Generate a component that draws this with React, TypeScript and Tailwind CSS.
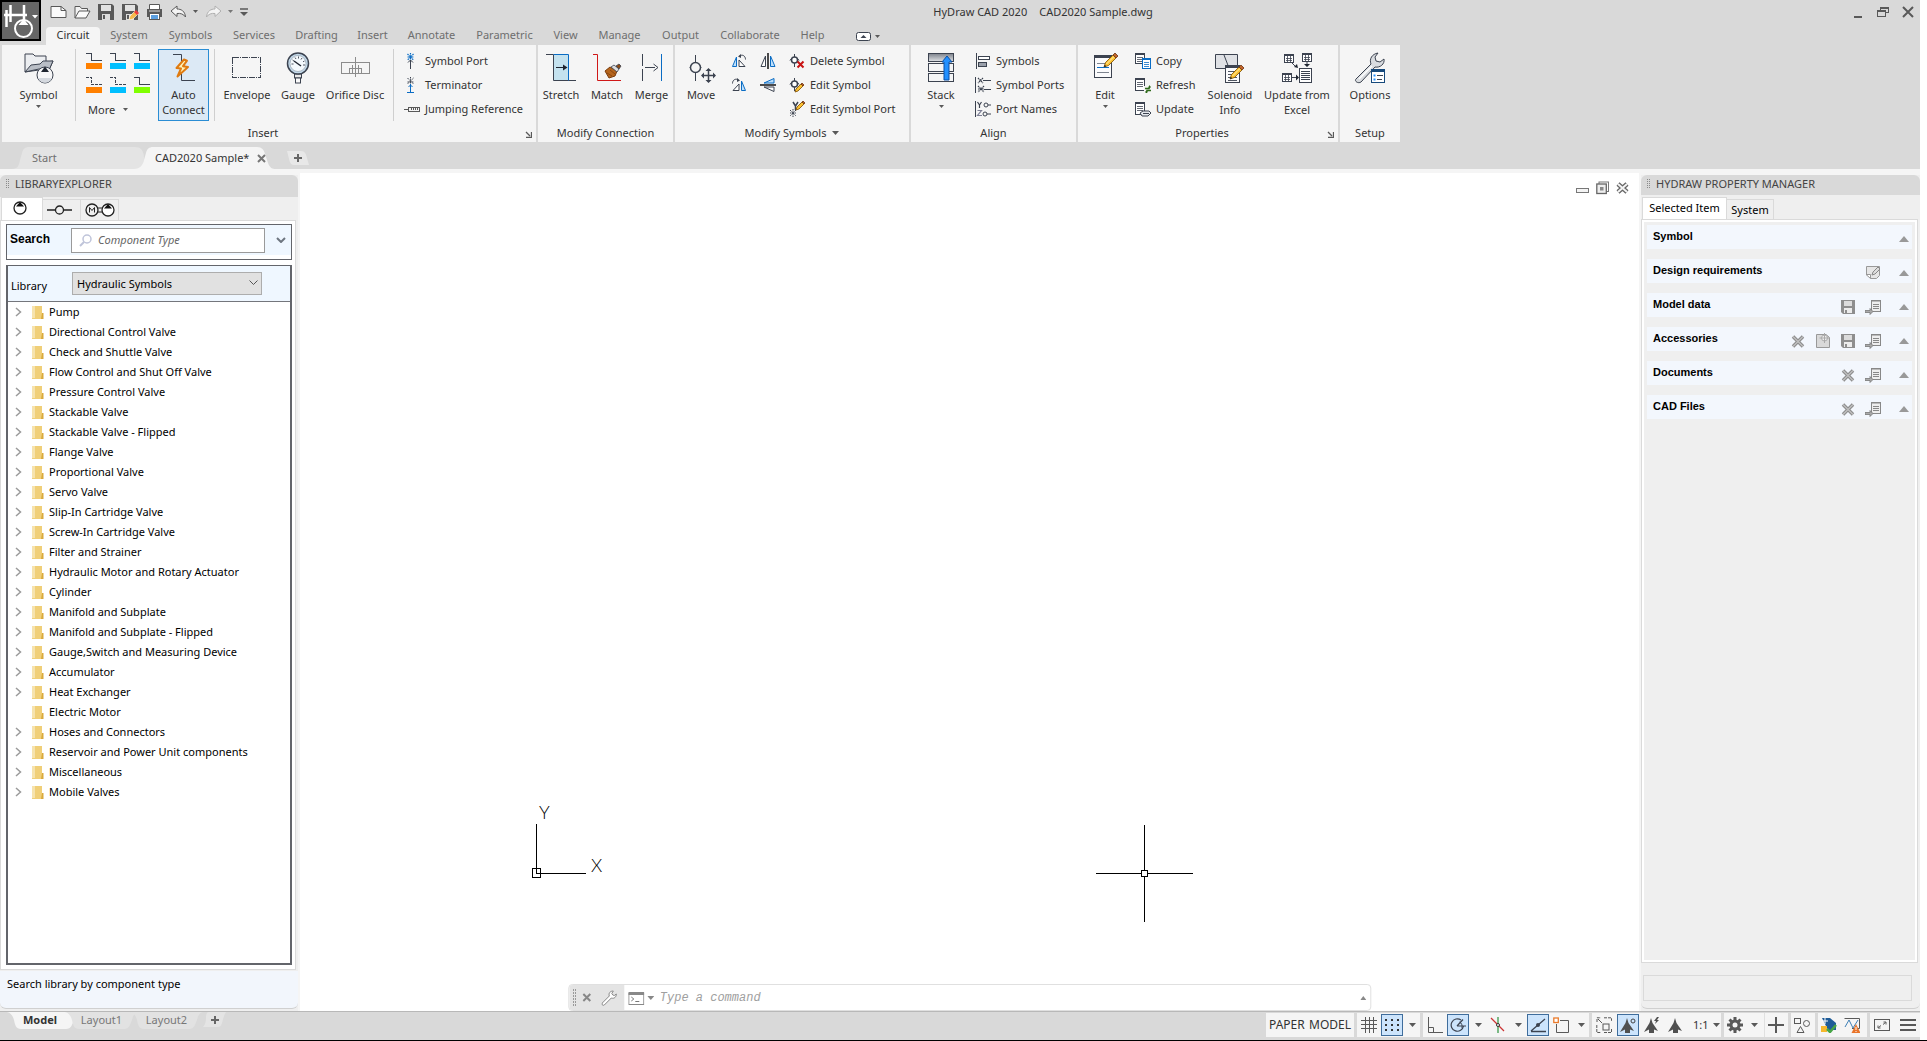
import React, { useState } from 'react';

type IconProps = { w?: number; h?: number; children: React.ReactNode; crisp?: boolean };

const INK = '#3c4350';
const GREY = '#595959';
const BLUE = '#0a6cc4';

function Icon({ w = 16, h = 16, children, crisp }: IconProps) {
  return (
    <svg
      width={w}
      height={h}
      viewBox={`0 0 ${w} ${h}`}
      fill="none"
      className="shrink-0"
      shapeRendering={crisp ? 'crispEdges' : 'auto'}
      aria-hidden="true"
    >
      {children}
    </svg>
  );
}

function Caret({ color = GREY, small }: { color?: string; small?: boolean }) {
  return small ? (
    <Icon w={5} h={3}><path d="M0 0h5L2.500 3z" fill={color} /></Icon>
  ) : (
    <Icon w={7} h={4}><path d="M0 0h7L3.500 4z" fill={color} /></Icon>
  );
}

/* ---------- shared icon parts ---------- */

const Pencil = ({ x, y }: { x: number; y: number }) => (
  <g transform={`translate(${x} ${y})`}>
    <path d="M0 14l1.500-4.500L9 2l3 3-7.500 7.500z" fill="#fcc233" stroke="#7a4a00" strokeWidth=".8" />
    <path d="M2.500 11L10 3.500" stroke="#fff0b0" strokeWidth="1" />
    <path d="M9 2l2-2 3 3-2 2z" fill="#c0642c" stroke="#6b3410" strokeWidth=".8" />
    <path d="M0 14l.8-2.200 1.500 1.400z" fill="#222" />
  </g>
);

const SmallPencil = ({ x, y }: { x: number; y: number }) => (
  <g transform={`translate(${x} ${y})`}>
    <path d="M0 9l1-3 5-5 2 2-5 5z" fill="#fcc233" stroke="#7a4a00" strokeWidth=".8" />
    <path d="M6 1l1-1 2 2-1 1z" fill="#c0642c" stroke="#6b3410" strokeWidth=".8" />
  </g>
);

const Table = ({ x, y, w, h, color = INK }: { x: number; y: number; w: number; h: number; color?: string }) => (
  <g>
    <rect x={x + 0.5} y={y + 0.5} width={w - 1} height={h - 1} fill="#fff" stroke={color} />
    <rect x={x} y={y} width={w} height={2} fill={color} />
    <path
      d={`M${x + 2} ${y + 4.5}h${w - 4}M${x + 2} ${y + 6.5}h${w - 4}${h > 10 ? `M${x + 2} ${y + 8.5}h${w - 4}` : ''}`}
      stroke={color}
      strokeWidth=".8"
    />
  </g>
);

/* ---------- quick access icons ---------- */

const NewIcon = () => (
  <Icon w={17}><path d="M1 2.500h10l5 4v7H1z" fill="#fafafa" stroke={GREY} /><path d="M11 2.500v4h5" stroke={GREY} /></Icon>
);
const OpenIcon = () => (
  <Icon w={17}><path d="M1 14V2.500h5l1.500 2h6V7" stroke={GREY} fill="#f3f3f3" /><path d="M1 14L5 7h11l-4 7z" fill="#fafafa" stroke={GREY} /></Icon>
);
const SaveIcon = ({ pencil }: { pencil?: boolean }) => (
  <Icon w={17}>
    <path d="M0 0h14l2 2v14H0z" fill={GREY} />
    <rect x="3" y="1" width="10" height="6" fill="#e2e2e2" />
    <rect x="4" y="10" width="8" height="6" fill="#ddd" />
    <rect x="5" y="11" width="2" height="4" fill={GREY} />
    {pencil && (
      <g>
        <path d="M7 16l1-4 5-5 3 3-5 5z" fill="#f8bb4c" stroke="#fff" strokeWidth=".6" />
        <path d="M12 8l2-2 3 3-2 2z" fill="#ee3d3d" />
      </g>
    )}
  </Icon>
);
const PrintIcon = () => (
  <Icon w={17}>
    <path d="M3.500 5V.5h10V5" fill="#fff" stroke={GREY} />
    <path d="M1 5h15v8H1z" fill={GREY} />
    <path d="M3 7h11" stroke="#ddd" />
    <rect x="3.500" y="9.500" width="10" height="6" fill="#fff" stroke={GREY} />
    <rect x="5" y="11" width="7" height="4" fill="#5b9fe0" />
  </Icon>
);
const UndoIcon = ({ color = GREY, flip }: { color?: string; flip?: boolean }) => (
  <Icon w={17}>
    <g transform={flip ? 'translate(17 0) scale(-1 1)' : undefined}>
      <path d="M1 7l6-5v3c4 0 8 2 8.500 8-2-3-5-4-8.500-3.500v3z" fill="#f4f4f4" stroke={color} strokeLinejoin="round" />
    </g>
  </Icon>
);

/* ---------- ribbon icons, 32px ---------- */

const SymbolFolderIcon = () => (
  <Icon w={32} h={32}>
    <path d="M2 20V2h8l2 2h11v6l7-1-4 9-10 0z" fill="#eceef1" stroke={INK} />
    <path d="M2 20l6-7 9-1 3-3 10 0-4 9-10-1z" fill="#b9bec6" stroke={INK} strokeLinejoin="round" />
    <circle cx="22" cy="23" r="8" fill="#f7f7f8" stroke={INK} />
    <path d="M22 14.500l-4 5.500h8z" fill="#1f2530" />
    <path d="M15 26a7.500 7.500 0 0 0 14 0" fill="#d5d9df" />
  </Icon>
);
const AutoConnectIcon = () => (
  <Icon w={32} h={32}>
    <path d="M5 2.500h8.500V9M13.500 22v6.500H27" stroke={INK} />
    <path d="M16 7.500L8.500 16l4.500.5-3.500 8L20 15l-5-.8 4-5.500z" fill="#fff3b8" stroke="#e07b10" strokeWidth="2" strokeLinejoin="round" />
  </Icon>
);
const EnvelopeIcon = () => (
  <Icon w={32} h={32} crisp>
    <rect x="1.500" y="5.500" width="28" height="20" stroke={INK} strokeDasharray="6 1 1 1" />
  </Icon>
);
const GaugeIcon = () => (
  <Icon w={32} h={32}>
    <rect x="12.500" y="22" width="7" height="4" fill="#e9e9e9" stroke={INK} />
    <rect x="13.500" y="26" width="5" height="5" fill="#fafafa" stroke={INK} />
    <circle cx="16" cy="11.500" r="10.500" fill="#c3d9ea" stroke={INK} strokeWidth="1.500" />
    <circle cx="16" cy="11.500" r="8" fill="#f4f9fd" stroke="#8c97a3" strokeWidth=".6" />
    <path d="M9.500 12h2M10.500 8l1.500 1M13 5.500l1 1.500M16.500 4.500v2M20 6l-1 1.500M22.500 9l-1.500.8M23 13h-2" stroke={INK} strokeWidth=".9" />
    <path d="M12 9l7 5" stroke="#1f2530" strokeWidth="1.500" />
  </Icon>
);
const OrificeIcon = () => (
  <Icon w={32} h={32} crisp>
    <path d="M2.500 10.500h28v11h-28zM16.500 5v20M10.500 21V16.500h12V21M13.500 21V13M19.500 21V13" stroke="#8c8c8c" />
  </Icon>
);
const StretchIcon = () => (
  <Icon w={32} h={32}>
    <rect x="8" y="2.500" width="15" height="26" fill="#c4e2ef" />
    <path d="M1 2.500h7.500v26H31" stroke={INK} />
    <path d="M8.500 2.500h15v26" stroke={BLUE} />
    <path d="M11 15.500h8" stroke="#1f2530" /><path d="M18 12.500l4.500 3-4.500 3z" fill="#1f2530" />
  </Icon>
);
const MatchIcon = () => (
  <Icon w={32} h={32}>
    <path d="M2 2.500h4.500v26H30" stroke="#d01818" />
    <path d="M14 19l5-4 7 4-2 5-6 2z" fill="#b5651d" stroke="#7a3c0c" />
    <path d="M16 21l5 3M19 18l5 4" stroke="#7a3c0c" strokeWidth=".7" />
    <path d="M20 15l3-2 5 4-2 3z" fill="#ddd" stroke={INK} strokeWidth=".8" />
    <path d="M25 14l3-2 2 2-2 3z" fill="#8a4b17" stroke={INK} strokeWidth=".8" />
  </Icon>
);
const MergeIcon = () => (
  <Icon w={32} h={32}>
    <path d="M6.500 2v12M6.500 17v12M9 15.500h10" stroke={INK} />
    <path d="M17.500 12l4.500 3.500-4.500 3.500" stroke={INK} />
    <path d="M25.500 2v27" stroke={BLUE} />
  </Icon>
);
const MoveIcon = () => (
  <Icon w={32} h={32}>
    <path d="M10.500 3v26" stroke={INK} />
    <path d="M10.500 11L4 16h13z" fill={INK} />
    <circle cx="10.500" cy="15.500" r="5" fill="#f5f5f5" stroke={INK} strokeWidth="1.500" />
    <path d="M23.500 17v13M17 23.500h13" stroke={INK} strokeWidth="1.500" />
    <path d="M23.500 16l-3 3h6zM23.500 31l-3-3h6zM16 23.500l3-3v6zM31 23.500l-3-3v6z" fill={INK} />
  </Icon>
);
const StackIcon = () => (
  <Icon w={32} h={32}>
    <defs>
      <linearGradient id="stk" x1="0" x2="0" y1="0" y2="1"><stop offset="0" stopColor="#7d828b" /><stop offset="1" stopColor="#dfe2e6" /></linearGradient>
    </defs>
    <rect x="3.500" y="1.500" width="25" height="8" fill="url(#stk)" stroke={INK} />
    <rect x="3.500" y="11.500" width="25" height="8" fill="#f4f5f6" stroke={INK} />
    <rect x="3.500" y="21.500" width="25" height="8" fill="#f4f5f6" stroke={INK} />
    <path d="M22 4l5 6h-3v18h-5V10h-2z" fill="#2290ff" stroke="#0a50a8" />
  </Icon>
);
const EditIcon = () => (
  <Icon w={32} h={32}>
    <rect x="5.500" y="3.500" width="17" height="22" fill="#fbfbfc" stroke={INK} />
    <rect x="5" y="3" width="18" height="3" fill={INK} />
    <path d="M8 11.500h9M8 20.500h12" stroke="#7d848f" /><path d="M8 15.500h12" stroke={BLUE} />
    <Pencil x={15} y={1} />
  </Icon>
);
const SolenoidIcon = () => (
  <Icon w={32} h={32}>
    <path d="M1.500 2.500h22v14h-22z" fill="#dfe1e5" stroke={INK} /><path d="M10 3l5 13" stroke={INK} />
    <rect x="11.500" y="13.500" width="14" height="17" fill="#fbfbfc" stroke={INK} />
    <rect x="11" y="13" width="15" height="3" fill={INK} />
    <path d="M14 19.500h8M14 22.500h6M14 25.500h9M14 28.500h9" stroke={INK} strokeWidth=".9" />
    <Pencil x={16} y={13} />
  </Icon>
);
const ExcelIcon = () => (
  <Icon w={32} h={32}>
    <Table x={3} y={2} w={10} h={9} /><Table x={21} y={1} w={10} h={9} /><Table x={1} y={21} w={10} h={9} />
    <path d="M6.500 4v6M9.500 4v6M24.500 3v6M27.500 3v6M4.500 23v6M7.500 23v6" stroke={INK} strokeWidth=".8" />
    <path d="M11 11l4 4M26 10v2M11 25.500h4" stroke={INK} />
    <path d="M17 16l-4-1 3-3zM26 15l-3-3h6zM18 25.500l-3-3v6z" fill="#1f2530" />
    <rect x="18.500" y="16.500" width="12" height="14" fill="#fff" stroke={INK} />
    <path d="M20 19.500h9M20 21.500h9M20 23.500h9M20 25.500h9M20 27.500h9" stroke={INK} />
  </Icon>
);
const OptionsIcon = () => (
  <Icon w={32} h={32}>
    <path d="M2 27L17 12c-2-5 1-10 7-11l-3 4 1 4 4 1 4-3c1 5-4 9-9 8L7 30c-3 2-7-1-5-3z" fill="#d9dce0" stroke={INK} />
    <path d="M5 27L18 14" stroke="#fff" strokeWidth="1.500" />
    <rect x="17.500" y="17.500" width="13" height="13" fill="#fff" stroke="#174a7c" />
    <rect x="17" y="17" width="14" height="3" fill="#174a7c" />
    <path d="M19.500 23.500h2M19.500 27.500h2" stroke="#2290ff" strokeWidth="2" /><path d="M23 23.500h6M23 27.500h5" stroke={INK} />
  </Icon>
);

/* ---------- ribbon icons, 16px ---------- */

const LineIcon = ({ color, dashed }: { color: string; dashed?: boolean }) => (
  <Icon w={16} h={18} crisp>
    <path d="M0 1.500h5.500v7H16" stroke={INK} strokeDasharray={dashed ? '3 1' : undefined} />
    <rect y="11" width="16" height="6" fill={color} />
  </Icon>
);
const SymbolPortIcon = () => (
  <Icon><path d="M3.500 1l6 6M9.500 1l-6 6M3.500 4h6M6.500 0v7" stroke={BLUE} strokeWidth="1.200" strokeDasharray="1.500 .7" /><path d="M6.500 7v9" stroke={INK} /><path d="M4 9.500L6.500 7 9 9.500" stroke={INK} /></Icon>
);
const TerminatorIcon = () => (
  <Icon><path d="M3.500 1l6 6M9.500 1l-6 6M3.500 5h6M6.500 0v8" stroke={INK} strokeDasharray="1.500 .7" /><path d="M6.500 7v8" stroke={BLUE} /><path d="M3 15.500h7M4.500 10L6.500 8l2 2" stroke={BLUE} /></Icon>
);
const JumpIcon = () => (
  <Icon crisp><path d="M0 8.500h4M4.500 6.500h11v4h-11zM7.500 7v2M9.500 7v2M11.500 7v2M13.500 7v2" stroke={GREY} /></Icon>
);
const FlipIcon = ({ kind }: { kind: 'rotR' | 'mirrorH' | 'rotL' | 'mirrorV' }) => {
  if (kind === 'mirrorH')
    return <Icon><path d="M5.500 3v10.500H1z" fill="#fff" stroke={INK} /><path d="M10.500 3v10.500H15z" fill="#bfe0fb" stroke={BLUE} /><path d="M8 0v16" stroke="#111" strokeWidth="1.500" /></Icon>;
  if (kind === 'mirrorV')
    return <Icon><path d="M14 1.500v4.500H4z" fill="#bfe0fb" stroke={BLUE} /><path d="M14 14.500V10H4z" fill="#fff" stroke={INK} /><path d="M0 8h16" stroke="#111" strokeWidth="1.500" /></Icon>;
  return (
    <Icon>
      <g transform={kind === 'rotL' ? 'translate(16 0) scale(-1 1)' : undefined}>
        <path d="M5.500 4v9.500H1.500z" fill="#bfe0fb" stroke={BLUE} />
        <path d="M8 13.500V7l6 6.500z" fill="#fff" stroke={INK} />
        <path d="M8.500 3c3-2 6 0 6 3.500" stroke={INK} />
        <path d="M7 3.500l3-2.500v4z" fill={INK} />
      </g>
    </Icon>
  );
};
const PortBase = () => (
  <>
    <path d="M5.500 1v13" stroke={INK} />
    <circle cx="5.500" cy="7" r="3" fill="#fff" stroke={INK} strokeWidth="1.500" />
    <path d="M2 6l-1 1.500M9 6l1 1.500" stroke={INK} />
  </>
);
const DeleteSymbolIcon = () => (
  <Icon><PortBase /><path d="M8.500 8.500l6 6M14.500 8.500l-6 6" stroke="#c81414" strokeWidth="2" /></Icon>
);
const EditSymbolIcon = () => <Icon><PortBase /><SmallPencil x={6} y={6} /></Icon>;
const EditPortIcon = () => (
  <Icon><path d="M4 1l2.500 4L9 1M6.500 5v4" stroke={INK} strokeWidth="1.500" /><path d="M1 9l6 6M7 9l-6 6M4 8v8M1 12h6" stroke={INK} strokeDasharray="1.500 .7" /><SmallPencil x={7} y={0} /></Icon>
);
const AlignSymbolsIcon = () => (
  <Icon crisp><path d="M1.500 0v16" stroke={INK} /><rect x="3.500" y="3.500" width="11" height="3" fill="#fff" stroke={INK} /><rect x="3.500" y="9.500" width="8" height="4" fill="#9aa0aa" stroke={INK} /></Icon>
);
const AlignPortsIcon = () => (
  <Icon><path d="M.5 0v16" stroke={INK} /><path d="M3 1l5 5M8 1L3 6M3 9l6 6M9 9l-6 6M3 12h6" stroke={INK} strokeWidth="1.200" strokeDasharray="1.500 .6" /><path d="M8 3.500h8M9 12.500h7" stroke={INK} /></Icon>
);
const AlignNamesIcon = () => (
  <Icon>
    <path d="M.5 0v16" stroke={INK} />
    <path d="M2.500 1l2 3 2-3M4.500 4v3" stroke={INK} strokeWidth="1.200" />
    <path d="M2.500 9.500h4l-4 5h4.500" stroke="#7d7f95" strokeWidth="1.200" />
    <circle cx="11" cy="4" r="2" stroke={INK} /><circle cx="10" cy="13" r="2" stroke={INK} /><path d="M13 4h3M12 13h4" stroke={INK} />
  </Icon>
);
const CopyIcon = () => <Icon><Table x={0} y={0} w={10} h={11} /><Table x={7} y={5} w={9} h={11} color={BLUE} /></Icon>;
const RefreshIcon = () => (
  <Icon><Table x={0} y={1} w={10} h={13} /><rect x="9" y="9" width="7" height="7" fill="#f5f5f5" /><path d="M10 11.500h4v-2M16 13.500h-4v2" stroke="#2f6b1a" strokeWidth="1.300" /><path d="M14 8v4l2-2zM12 17v-4l-2 2z" fill="#2f6b1a" /></Icon>
);
const UpdateIcon = () => (
  <Icon><Table x={0} y={1} w={10} h={13} /><path d="M5 12l3-2h6l2 2-3 3H7z" fill="#e6e9ed" stroke={INK} /><path d="M8 12.500h6" stroke={INK} /></Icon>
);

/* ---------- ribbon building blocks ---------- */

function BigButton({ icon, label, caret, active, className }: { icon: React.ReactNode; label: string; caret?: boolean; active?: boolean; className: string }) {
  return (
    <button
      type="button"
      aria-pressed={active}
      className={`flex h-[72px] shrink-0 flex-col items-center border pt-0.5 leading-[15px] ${active ? 'border-[#2a8dd4] bg-[#dce9f5]' : 'border-transparent'} ${className}`}
    >
      {icon}
      <span className="mt-[3px] whitespace-pre text-center">{label}</span>
      {caret && <span className="mt-[3px]"><Caret small /></span>}
    </button>
  );
}

function SmallButton({ icon, label }: { icon: React.ReactNode; label: string }) {
  return (
    <button type="button" className="flex h-6 items-center gap-[5px] whitespace-nowrap">
      {icon}
      {label}
    </button>
  );
}

function Panel({ title, className = '', children, launcher, dropdown }: { title: string; className?: string; children: React.ReactNode; launcher?: boolean; dropdown?: boolean }) {
  return (
    <section className={`flex shrink-0 flex-col bg-[#f5f5f5] pt-1 ${className}`}>
      <div className="flex h-[72px]">{children}</div>
      <div className={`relative flex h-[21px] items-center justify-center gap-1.5 pt-0.5 ${launcher ? 'pr-3' : ''}`}>
        {title}
        {dropdown && <Caret />}
        {launcher && (
          <button type="button" aria-label={`${title} settings`} className="absolute right-1 bottom-1">
            <Icon w={7} h={7}><path d="M1 1l4 4M6.500 1v5.500H1" stroke={GREY} strokeWidth="1.300" /></Icon>
          </button>
        )}
      </div>
    </section>
  );
}

const Sep = () => <div className="w-px shrink-0 bg-[#cfcfcf]" />;

const ribbonTabs = [
  { name: 'Circuit', w: 'w-[54px]' },
  { name: 'System', w: 'w-[58px]' },
  { name: 'Symbols', w: 'w-[65px]' },
  { name: 'Services', w: 'w-[62px]' },
  { name: 'Drafting', w: 'w-[63px]' },
  { name: 'Insert', w: 'w-[49px]' },
  { name: 'Annotate', w: 'w-[69px]' },
  { name: 'Parametric', w: 'w-[77px]' },
  { name: 'View', w: 'w-[45px]' },
  { name: 'Manage', w: 'w-[63px]' },
  { name: 'Output', w: 'w-[59px]' },
  { name: 'Collaborate', w: 'w-[80px]' },
  { name: 'Help', w: 'w-[45px]' },
];

function Header() {
  const [tab, setTab] = useState('Circuit');
  return (
    <header className="flex h-[45px] text-[#444]">
      <button type="button" aria-label="Application menu" className="h-[41px] w-[41px] shrink-0">
        <Icon w={41} h={41}>
          <rect x="1" y="1" width="39" height="39" fill="#666" stroke="#000" strokeWidth="2" />
          <path d="M4 15h23M6.500 10v17M10.500 5v17M24 5v17" stroke="#fff" strokeWidth="2.500" />
          <circle cx="23.500" cy="28.500" r="8.500" stroke="#fff" strokeWidth="2" />
          <path d="M23.500 19l-5 6h10zM32 15h6l-3 3.500z" fill="#fff" />
        </Icon>
      </button>
      <div className="flex min-w-0 flex-1 flex-col">
        <div className="flex h-[27px] items-center pb-1">
          <div className="flex w-[209px] items-center gap-[7px] pl-[9px]">
            <button type="button" aria-label="New"><NewIcon /></button>
            <button type="button" aria-label="Open"><OpenIcon /></button>
            <button type="button" aria-label="Save"><SaveIcon /></button>
            <button type="button" aria-label="Save as"><SaveIcon pencil /></button>
            <button type="button" aria-label="Print"><PrintIcon /></button>
            <button type="button" aria-label="Undo" className="flex items-center gap-1.5"><UndoIcon /><Caret small /></button>
            <button type="button" aria-label="Redo" className="flex items-center gap-1.5"><UndoIcon flip color="#b0b0b0" /><Caret small color="#777" /></button>
            <button type="button" aria-label="Customize"><Icon w={8} h={8}><path d="M0 1h8" stroke={GREY} strokeWidth="1.500" /><path d="M0 4h8L4 8z" fill={GREY} /></Icon></button>
          </div>
          <div className="flex flex-1 justify-center gap-3 text-[#333]">
            <span>HyDraw CAD 2020</span>
            <span>CAD2020 Sample.dwg</span>
          </div>
          <div className="flex w-[84px] items-center justify-end gap-[13px] pr-1.5">
            <button type="button" aria-label="Minimize"><Icon w={12} h={12}><path d="M2 11h8" stroke={GREY} strokeWidth="2" /></Icon></button>
            <button type="button" aria-label="Restore"><Icon w={12} h={12} crisp><path d="M3.500 4V1.500h8v5H9M.5 4.500h8v6h-8z" stroke={GREY} /><path d="M3 2h9M0 5h9" stroke={GREY} /></Icon></button>
            <button type="button" aria-label="Close"><Icon w={12} h={12}><path d="M1 1l10 10M11 1L1 11" stroke={GREY} strokeWidth="2" /></Icon></button>
          </div>
        </div>
        <nav className="flex h-[18px] pl-[5px] text-[#6e6e6e]">
          {ribbonTabs.map(t => (
            <button
              key={t.name}
              type="button"
              onClick={() => setTab(t.name)}
              className={`flex shrink-0 items-center justify-center pb-0.5 ${t.w} ${tab === t.name ? 'rounded-t-sm bg-[#f5f5f5] text-[#333]' : ''}`}
            >
              {t.name}
            </button>
          ))}
          <button type="button" aria-label="Minimize ribbon" className="ml-[21px] flex items-center gap-1">
            <Icon w={15} h={9}><rect x=".5" y=".5" width="14" height="8" rx="2" fill="#fff" stroke={INK} /><path d="M4.500 6h6l-3-3z" fill={INK} /></Icon>
            <Caret small />
          </button>
        </nav>
      </div>
    </header>
  );
}

function Ribbon() {
  return (
    <div className="flex gap-0.5 pl-0.5 text-[#333]">
      <Panel title="Insert" launcher className="w-[534px]">
        <BigButton icon={<SymbolFolderIcon />} label="Symbol" caret className="w-[73px]" />
        <Sep />
        <div className="flex flex-col pt-[3px] pl-2.5">
          <div className="grid grid-cols-3 gap-x-2 gap-y-1.5">
            <button type="button" aria-label="Working line"><LineIcon color="#ff8000" /></button>
            <button type="button" aria-label="Return line"><LineIcon color="#00bfff" /></button>
            <button type="button" aria-label="Drain line"><LineIcon color="#00bfff" /></button>
            <button type="button" aria-label="Pilot line"><LineIcon color="#ff8000" dashed /></button>
            <button type="button" aria-label="Pilot drain line"><LineIcon color="#00bfff" dashed /></button>
            <button type="button" aria-label="Other line"><LineIcon color="#80ff00" /></button>
          </div>
          <button type="button" className="mt-2 flex items-center gap-2 pl-0.5 leading-[15px]">More <Caret small /></button>
        </div>
        <BigButton icon={<AutoConnectIcon />} label={'Auto\nConnect'} active className="ml-2 mr-[5px] w-[51px]" />
        <Sep />
        <BigButton icon={<EnvelopeIcon />} label="Envelope" className="w-[64px]" />
        <BigButton icon={<GaugeIcon />} label="Gauge" className="w-[38px]" />
        <BigButton icon={<OrificeIcon />} label="Orifice Disc" className="w-[76px]" />
        <Sep />
        <div className="pl-2.5">
          <SmallButton icon={<SymbolPortIcon />} label="Symbol Port" />
          <SmallButton icon={<TerminatorIcon />} label="Terminator" />
          <SmallButton icon={<JumpIcon />} label="Jumping Reference" />
        </div>
      </Panel>

      <Panel title="Modify Connection" className="w-[135px]">
        <BigButton icon={<StretchIcon />} label="Stretch" className="w-[46px]" />
        <BigButton icon={<MatchIcon />} label="Match" className="w-[46px]" />
        <BigButton icon={<MergeIcon />} label="Merge" className="w-[43px]" />
      </Panel>

      <Panel title="Modify Symbols" dropdown className="w-[234px]">
        <BigButton icon={<MoveIcon />} label="Move" className="w-[52px]" />
        <div className="grid h-12 grid-cols-2 items-center gap-x-[13px] pl-1">
          <button type="button" aria-label="Rotate right"><FlipIcon kind="rotR" /></button>
          <button type="button" aria-label="Mirror horizontally"><FlipIcon kind="mirrorH" /></button>
          <button type="button" aria-label="Rotate left"><FlipIcon kind="rotL" /></button>
          <button type="button" aria-label="Mirror vertically"><FlipIcon kind="mirrorV" /></button>
        </div>
        <div className="pl-[13px]">
          <SmallButton icon={<DeleteSymbolIcon />} label="Delete Symbol" />
          <SmallButton icon={<EditSymbolIcon />} label="Edit Symbol" />
          <SmallButton icon={<EditPortIcon />} label="Edit Symbol Port" />
        </div>
      </Panel>

      <Panel title="Align" className="w-[165px]">
        <BigButton icon={<StackIcon />} label="Stack" caret className="w-[60px]" />
        <div className="pl-1">
          <SmallButton icon={<AlignSymbolsIcon />} label="Symbols" />
          <SmallButton icon={<AlignPortsIcon />} label="Symbol Ports" />
          <SmallButton icon={<AlignNamesIcon />} label="Port Names" />
        </div>
      </Panel>

      <Panel title="Properties" launcher className="w-[260px]">
        <BigButton icon={<EditIcon />} label="Edit" caret className="w-[54px]" />
        <div className="w-[66px] pl-[3px]">
          <SmallButton icon={<CopyIcon />} label="Copy" />
          <SmallButton icon={<RefreshIcon />} label="Refresh" />
          <SmallButton icon={<UpdateIcon />} label="Update" />
        </div>
        <BigButton icon={<SolenoidIcon />} label={'Solenoid\nInfo'} className="w-[64px]" />
        <BigButton icon={<ExcelIcon />} label={'Update from\nExcel'} className="w-[70px]" />
      </Panel>

      <Panel title="Setup" className="w-[60px]">
        <BigButton icon={<OptionsIcon />} label="Options" className="w-full" />
      </Panel>
    </div>
  );
}

function DocTabs() {
  return (
    <div className="flex h-[27px] items-end pl-3 text-[#333]">
      <button type="button" className="relative flex h-[22px] w-[134px] items-center pl-5 text-[#707070]">
        <span className="absolute inset-0">
          <Icon w={134} h={22}><path d="M0 22c6 0 7-4 8-9l2-7c1-4 3-6 7-6h106c5 0 9 3 9 11s-3 11-8 11z" fill="#e4e4e4" /></Icon>
        </span>
        <span className="relative">Start</span>
      </button>
      <div className="relative flex h-[22px] w-[137px] items-center pl-[9px]">
        <span className="absolute inset-0 -left-3">
          <Icon w={150} h={22}><path d="M0 22c6 0 9-4 10-9l2-7c1-4 3-6 7-6h104c5 0 7 3 8 7l3 9c2 5 4 6 8 6z" fill="#f5f5f5" /></Icon>
        </span>
        <span className="relative flex items-center gap-2">
          CAD2020 Sample*
          <button type="button" aria-label="Close drawing"><Icon w={9} h={9}><path d="M1 1l7 7M8 1L1 8" stroke="#777" strokeWidth="2" /></Icon></button>
        </span>
      </div>
      <button type="button" aria-label="New drawing" className="mb-1 ml-1">
        <Icon w={22} h={14}><path d="M0 0h14c4 0 5 3 6 7l2 7H8c-4 0-5-2-6-6z" fill="#e8e8e8" /><path d="M7 7h8M11 3v8" stroke="#666" strokeWidth="2" /></Icon>
      </button>
    </div>
  );
}

/* ---------- library explorer ---------- */

const Gripper = () => (
  <Icon w={4} h={10} crisp>
    <path d="M.5 0v10M2.500 0v10" stroke="#8a8a8a" strokeDasharray="1 1" />
  </Icon>
);

const libraryItems = [
  'Pump', 'Directional Control Valve', 'Check and Shuttle Valve', 'Flow Control and Shut Off Valve',
  'Pressure Control Valve', 'Stackable Valve', 'Stackable Valve - Flipped', 'Flange Valve', 'Proportional Valve',
  'Servo Valve', 'Slip-In Cartridge Valve', 'Screw-In Cartridge Valve', 'Filter and Strainer',
  'Hydraulic Motor and Rotary Actuator', 'Cylinder', 'Manifold and Subplate', 'Manifold and Subplate - Flipped',
  'Gauge,Switch and Measuring Device', 'Accumulator', 'Heat Exchanger', 'Electric Motor', 'Hoses and Connectors',
  'Reservoir and Power Unit components', 'Miscellaneous', 'Mobile Valves',
];

const PumpIcon = ({ x }: { x: number }) => (
  <g><circle cx={x} cy="7" r="6" fill="#fff" stroke="#222" strokeWidth="1.300" /><path d={`M${x} 1l-4 4.500h8z`} fill="#111" /></g>
);

function LibraryExplorer() {
  return (
    <aside className="flex w-[300px] shrink-0 flex-col bg-[#f5f5f5] pt-0.5 text-black">
      <div className="mr-0.5 flex min-h-0 flex-1 flex-col bg-[#efefef]">
        <h2 className="flex h-[22px] items-center gap-[5px] rounded-t-md bg-[#d9d9d9] pb-1 pl-1.5 text-[#444]"><Gripper />LIBRARYEXPLORER</h2>
        <div className="flex h-[23px] items-end pl-px">
          <button type="button" aria-label="Symbols" className="flex h-[23px] w-[42px] justify-center border border-b-0 border-[#dadada] bg-white pt-[3px] pr-1">
            <Icon w={15} h={14}><PumpIcon x={7} /></Icon>
          </button>
          <button type="button" aria-label="Connections" className="flex h-[21px] w-[38px] items-center justify-center border-t border-r border-[#dadada] pr-1">
            <Icon w={26} h={10}><path d="M0 5h8M17 5h8" stroke="#222" strokeWidth="1.500" /><circle cx="12.500" cy="5" r="4" stroke="#222" strokeWidth="1.300" /></Icon>
          </button>
          <button type="button" aria-label="Units" className="flex h-[21px] w-[38px] items-center justify-center border-t border-r border-[#dadada]">
            <Icon w={30} h={14}><circle cx="7" cy="7" r="6" stroke="#222" strokeWidth="1.300" /><path d="M4.500 9.500v-5L7 7.500l2.500-3v5M13 5h5M13 9h5" stroke="#222" strokeWidth="1" /><PumpIcon x={23} /></Icon>
          </button>
        </div>
        <div className="mr-0.5 flex min-h-0 flex-1 flex-col gap-[5px] border border-[#dadada] bg-white pt-[3px] pr-[3px] pb-1 pl-[5px]">
          <div className="border border-[#63656b] pb-1">
            <div className="flex h-[30px] items-center bg-[#eff7ff] pl-[3px]">
              <label htmlFor="search" className="w-[61px] pb-0.5 font-['Liberation_Sans',sans-serif] text-[12px] font-bold">Search</label>
              <div className="flex h-[25px] flex-1 items-center gap-1.5 border border-[#9a9a9a] bg-white pl-[7px]">
                <Icon w={13} h={13}><circle cx="8" cy="5" r="4" stroke="#bfc4da" strokeWidth="1.500" /><path d="M5 8l-4 4" stroke="#bfc4da" strokeWidth="2" /></Icon>
                <input id="search" type="text" placeholder="Component Type" className="w-full min-w-0 italic outline-none placeholder:text-[#666]" />
              </div>
              <button type="button" aria-label="Expand search" className="flex w-[26px] justify-center pl-1.5">
                <Icon w={10} h={6}><path d="M1 1l4 4 4-4" stroke="#6e7680" strokeWidth="2" /></Icon>
              </button>
            </div>
          </div>
          <div className="flex min-h-0 flex-1 flex-col border-2 border-t border-[#63656b]">
            <div className="flex h-[35px] items-center bg-[#eff7ff] pl-[3px]">
              <label htmlFor="library" className="w-[61px] pt-1">Library</label>
              <div className="relative w-[190px]">
                <select id="library" className="h-[23px] w-full appearance-none border border-[#adadad] bg-[#e1e1e1] pl-1">
                  <option>Hydraulic Symbols</option>
                </select>
                <span className="pointer-events-none absolute top-2 right-1"><Icon w={9} h={6}><path d="M.5.5l4 4 4-4" stroke="#555" /></Icon></span>
              </div>
            </div>
            <ul className="min-h-0 flex-1 overflow-hidden border-t border-[#74767c] bg-white">
              {libraryItems.map(item => (
                <li key={item}>
                  <button type="button" className="flex h-5 w-full items-center pl-[7px]">
                    <span className="flex w-[17px]">
                      {item !== 'Electric Motor' && <Icon w={7} h={10}><path d="M1 1l4.500 4L1 9" stroke="#9a9a9a" strokeWidth="1.500" /></Icon>}
                    </span>
                    <Icon w={12} h={14}><path d="M0 1h10v13H0z" fill="#f0cf78" /><path d="M0 1h3v12H0z" fill="#f6e3ae" /><path d="M10 8h1.500v6H9z" fill="#d9a93c" /></Icon>
                    <span className="ml-[5px] whitespace-nowrap">{item}</span>
                  </button>
                </li>
              ))}
            </ul>
          </div>
        </div>
        <p className="mt-px mb-0.5 h-[38px] rounded-b-md border-b border-[#d0d0d0] bg-[#f2f6fc] pt-[5px] pl-[7px]">Search library by component type</p>
      </div>
    </aside>
  );
}

/* ---------- drawing area ---------- */

function Canvas() {
  return (
    <main className="relative min-w-0 flex-1 bg-white">
      <div className="absolute top-2 right-2.5 flex items-center gap-[7px]">
        <button type="button" aria-label="Minimize drawing"><Icon w={13} h={14}><rect x=".5" y="7.500" width="12" height="4" fill="#f4f4f4" stroke="#777" /></Icon></button>
        <button type="button" aria-label="Restore drawing"><Icon w={13} h={14}><rect x="3" y="1" width="9.500" height="9.500" fill="#fff" stroke="#777" /><rect x=".8" y="3" width="9.500" height="9.500" fill="#eee" stroke="#666" strokeWidth="1.300" /><rect x="4" y="6" width="3.500" height="3.500" fill="#888" /></Icon></button>
        <button type="button" aria-label="Close drawing"><Icon w={13} h={14}><path d="M2 3l9 8M11 3l-9 8" stroke="#666" strokeWidth="4.500" /><path d="M2 3l9 8M11 3l-9 8" stroke="#f4f4f4" strokeWidth="2" /></Icon></button>
      </div>

      {/* UCS origin */}
      <div className="absolute bottom-[132px] left-[231px]">
        <svg width="84" height="80" viewBox="0 -4 84 80" fill="none" shapeRendering="crispEdges">
          <path d="M5.500 21v49.500H55M1.500 65.500h8v9h-8z" stroke="#000" />
          <text x="8" y="16" fontSize="18" fill="#000" fontFamily="Lato, sans-serif" fontWeight="300">Y</text>
          <text x="60" y="69" fontSize="18" fill="#000" fontFamily="Lato, sans-serif" fontWeight="300">X</text>
        </svg>
      </div>

      {/* crosshair cursor */}
      <div className="absolute bottom-[89px] left-[796px]">
        <Icon w={97} h={97} crisp><path d="M48.500 0v45M48.500 52v45M0 48.500h45M52 48.500h45M45.500 45.500h6v6h-6z" stroke="#000" /></Icon>
      </div>

      <div className="absolute bottom-0 left-1/2 flex h-[27px] w-3/5 -translate-x-1/2 overflow-hidden rounded border border-[#e0e0e0] bg-white">
        <div className="flex w-[55px] shrink-0 items-center gap-1.5 bg-[#e4e4e4] pl-[3px]">
          <Icon w={4} h={17} crisp><path d="M1 0v17M3 0v17" stroke="#999" strokeWidth="1" strokeDasharray="2 1" /></Icon>
          <button type="button" aria-label="Close command line"><Icon w={9} h={9}><path d="M1 1l7 7M8 1L1 8" stroke="#888" strokeWidth="2" /></Icon></button>
          <button type="button" aria-label="Command settings" className="ml-1"><Icon><path d="M1 13l7-7c-1-3 1-5 4-5l-1.500 2.500 1 1.500 1.500.5L15 4c0 3-2 5-5 4l-7 7c-1.500 1-3-.5-2-2z" fill="#fff" stroke="#888" /></Icon></button>
        </div>
        <button type="button" aria-label="Recent commands" className="flex items-center gap-[3px] pl-1">
          <Icon w={16} h={14}><rect x=".5" y="2.500" width="15" height="11" fill="#fff" stroke="#888" /><rect y="1" width="16" height="3" fill="#888" /><path d="M3 6l2.500 2L3 10M7 10.500h4" stroke="#777" /></Icon>
          <Caret color="#888" />
        </button>
        <input aria-label="Command" type="text" placeholder="Type a command" className="ml-1.5 min-w-0 flex-1 font-['Liberation_Mono',monospace] text-[12px] italic outline-none placeholder:text-[#a0a0a0]" />
        <button type="button" aria-label="Command history" className="px-1"><Icon w={6} h={4}><path d="M0 4h6L3 0z" fill="#888" /></Icon></button>
      </div>
    </main>
  );
}

/* ---------- property manager ---------- */

const tools: Record<string, React.ReactNode> = {
  note: <Icon><path d="M1.500 1.500h13v9l-3 3H6L1.500 9.500z" fill="#e6e6e6" stroke="#999" /><path d="M1 9.500h4.500v4z" fill="#fff" stroke="#999" /><path d="M7 10l1-3 5-5 2 2-5 5z" fill="#ddd" stroke="#888" /></Icon>,
  save: <Icon><path d="M1 1h14v14H3l-2-2z" fill="#8e8e8e" /><rect x="4" y="2" width="8" height="5" fill="#dcdcdc" /><rect x="4" y="9" width="8" height="5" fill="#ececec" /><rect x="5" y="11" width="2" height="3" fill="#8e8e8e" /></Icon>,
  insert: <Icon><rect x="6.500" y="1.500" width="9" height="11" fill="#eee" stroke="#888" /><path d="M6 2h10M8 5.500h6M8 7.500h6M8 9.500h6" stroke="#888" /><path d="M0 11.500h5V9.500l3 3-3 3v-2H0z" fill="#aaa" stroke="#777" strokeWidth=".8" /></Icon>,
  remove: <Icon><path d="M3 3.500l10 10M13 3.500l-10 10" stroke="#8a8a8a" strokeWidth="3.500" /><path d="M3 3.500l10 10M13 3.500l-10 10" stroke="#bdbdbd" strokeWidth="1.500" /></Icon>,
  add: <Icon><path d="M1.500 1.500H11l3.500 3v10h-13z" fill="#d9d9d9" stroke="#999" /><circle cx="9.500" cy="5" r="3" fill="#eee" stroke="#aaa" /><path d="M9.500 0v10M4.500 5h10" stroke="#aaa" /></Icon>,
};

const sections = [
  { name: 'Symbol', icons: [] },
  { name: 'Design requirements', icons: ['note'] },
  { name: 'Model data', icons: ['save', 'insert'] },
  { name: 'Accessories', icons: ['remove', 'add', 'save', 'insert'] },
  { name: 'Documents', icons: ['remove', 'insert'] },
  { name: 'CAD Files', icons: ['remove', 'insert'] },
];

function PropertyManager() {
  return (
    <aside className="flex w-[281px] shrink-0 flex-col bg-[#f5f5f5] pt-0.5 pl-0.5 text-black">
      <div className="flex min-h-0 flex-1 flex-col bg-[#efefef]">
        <h2 className="flex h-5 items-center gap-[5px] rounded-t-md bg-[#d9d9d9] pb-0.5 pl-1.5 text-[#444]"><Gripper />HYDRAW PROPERTY MANAGER</h2>
        <div className="mt-0.5 flex h-[22px] items-end pl-px">
          <button type="button" className="h-[22px] w-[85px] border border-b-0 border-[#dadada] bg-white pb-0.5">Selected Item</button>
          <button type="button" className="h-5 w-[47px] border border-b-0 border-l-0 border-[#dadada]">System</button>
        </div>
        <div className="mr-0.5 min-h-0 flex-1 border border-[#dadada] bg-white p-0.5">
          <div className="flex h-full flex-col gap-2.5 bg-[#efefef] px-[3px] pt-[3px]">
            {sections.map(s => (
              <div key={s.name} className="flex h-6 items-center bg-[#f3f7fd] pr-[3px] pl-1.5">
                <h3 className="flex-1 pb-0.5 font-['Liberation_Sans',sans-serif] text-[11px] font-bold">{s.name}</h3>
                <div className="flex gap-[9px] pt-1">
                  {s.icons.map(i => <button key={i} type="button" aria-label={`${s.name} ${i}`}>{tools[i]}</button>)}
                </div>
                <button type="button" aria-label={`Collapse ${s.name}`} className="ml-[18px] pt-1"><Icon w={10} h={6}><path d="M0 6h10L5 0z" fill="#999" /></Icon></button>
              </div>
            ))}
          </div>
        </div>
        <div className="mt-3 mr-2 ml-0.5 h-[26px] border border-[#dadada]" />
        <div className="mb-0.5 h-2 rounded-b-md border-b border-[#d0d0d0]" />
      </div>
    </aside>
  );
}

/* ---------- status bar ---------- */

const LayoutTab = ({ name, active }: { name: string; active?: boolean }) => (
  <button type="button" className={`relative flex h-[17px] items-center justify-center pb-0.5 ${active ? 'w-[58px] font-bold text-[#333]' : 'w-[65px] text-[#777]'}`}>
    <span className="absolute inset-0 -left-1">
      <Icon w={73} h={17}><path d="M0 0h73c-4 1-5 4-6 8-2 5-3 9-8 9H14c-5 0-6-4-7-9C6 4 4 1 0 0z" fill={active ? '#f5f5f5' : '#e2e2e2'} /></Icon>
    </span>
    <span className="relative">{name}</span>
  </button>
);

function StatusToggle({ label, active, children }: { label: string; active?: boolean; children: React.ReactNode }) {
  return (
    <button
      type="button"
      aria-label={label}
      aria-pressed={!!active}
      className={`flex h-[22px] w-[22px] shrink-0 items-center justify-center border ${active ? 'border-[#3f6d9c] bg-[#cce4fc]' : 'border-transparent'}`}
    >
      {children}
    </button>
  );
}

const StatusCaret = ({ label }: { label: string }) => (
  <button type="button" aria-label={label} className="flex h-[22px] w-4 items-center justify-center"><Caret /></button>
);

const Group = ({ children, className = '' }: { children: React.ReactNode; className?: string }) => (
  <div className={`flex h-6 items-center bg-[#f5f5f5] ${className}`}>{children}</div>
);

const Arrowhead = ({ children }: { children?: React.ReactNode }) => (
  <Icon><path d="M7 1l1.500 5L14 14l-4-1.500V16H5v-3.500L0 15l5.500-9z" fill="#505050" />{children}</Icon>
);

function StatusBar() {
  return (
    <footer className="flex h-[29px] justify-between border-t border-[#b8b8b8] bg-[#d9d9d9]">
      <div className="flex pl-[11px]">
        <LayoutTab name="Model" active />
        <LayoutTab name="Layout1" />
        <LayoutTab name="Layout2" />
        <button type="button" aria-label="New layout" className="ml-1 h-4">
          <Icon w={24} h={16}><path d="M6 0h17c-2 3-3 7-4 11-1 3-2 4-5 4H0c3-3 3-7 3-10 0-3 1-5 3-5z" fill="#e4e4e4" /><path d="M8 8h8M12 4v8" stroke="#666" strokeWidth="2" /></Icon>
        </button>
      </div>
      <div className="flex gap-[3px] pt-px text-[#333]">
        <Group className="w-[88px] justify-between px-[3px] text-[12px]">
          <button type="button">PAPER</button>
          <button type="button">MODEL</button>
        </Group>
        <Group className="w-[63px] gap-px pl-px">
          <StatusToggle label="Grid"><Icon crisp><path d="M4.500 0v16M8.500 0v16M12.500 0v16M0 3.500h16M0 7.500h16M0 11.500h16" stroke={GREY} /></Icon></StatusToggle>
          <StatusToggle label="Snap" active>
            <Icon crisp><path d="M1 3h14M1 8h14M1 13h14" stroke="#333" strokeWidth="2" strokeDasharray="2 4" /></Icon>
          </StatusToggle>
          <StatusCaret label="Snap settings" />
        </Group>
        <Group className="w-[166px] gap-px pl-px">
          <StatusToggle label="Ortho"><Icon><path d="M1.500 0v15.500H16M1.500 10.500h5v5" stroke={GREY} /></Icon></StatusToggle>
          <StatusToggle label="Polar" active><Icon><path d="M11 3a6.200 6.200 0 1 0 2.500 6" stroke={INK} strokeWidth="1.200" /><path d="M7 9l6-6.500M7 9h9" stroke={INK} strokeWidth="1.200" /><path d="M9.500 5c2 1 3 3 2.500 6" stroke={INK} /></Icon></StatusToggle>
          <StatusCaret label="Polar settings" />
          <StatusToggle label="Isodraft"><Icon><path d="M1 1l13 13" stroke="#c33" strokeWidth="1.300" /><path d="M8 0v16" stroke="#3a9a4a" strokeWidth="1.300" /><circle cx="8" cy="8" r="1.500" fill="#fff" stroke="#333" /></Icon></StatusToggle>
          <StatusCaret label="Isodraft settings" />
          <StatusToggle label="Snap tracking" active><Icon><path d="M1 14.500h15M1 14L15 2" stroke={INK} strokeWidth="1.300" /><circle cx="8" cy="8" r="2" fill={INK} /></Icon></StatusToggle>
          <StatusToggle label="Object snap"><Icon><path d="M7 3.500h8.500v12H3.500V7" stroke={GREY} /><rect x=".8" y="1" width="4.500" height="4.500" fill="#fff" stroke="#ea7a2a" strokeWidth="1.300" /></Icon></StatusToggle>
          <StatusCaret label="Object snap settings" />
        </Group>
        <Group className="w-[129px] gap-0.5 pl-px">
          <StatusToggle label="Dynamic scale"><Icon><path d="M1 5V.8h4M8 .8h7.500v3M.8 8v7.500H5M15.500 12v3.500H8" stroke={GREY} strokeDasharray="3 1" /><rect x="7" y="7" width="6" height="6" stroke={GREY} /><path d="M2 2l4 4" stroke={GREY} /></Icon></StatusToggle>
          <StatusToggle label="Annotation visibility" active><Arrowhead><circle cx="13" cy="4" r="2" stroke="#444" /></Arrowhead></StatusToggle>
          <StatusToggle label="Auto scale"><Arrowhead><path d="M13 0l-3 4h2l-1 3 4-4h-2l2-3z" fill="#505050" /></Arrowhead></StatusToggle>
          <StatusToggle label="Annotation scale"><Arrowhead /></StatusToggle>
          <button type="button" className="flex items-center gap-1 pl-1">1:1<Caret /></button>
        </Group>
        <Group className="w-[40px]">
          <StatusToggle label="Workspace">
            <Icon><path d="M8 0v16M0 8h16M2.500 2.500l11 11M13.500 2.500l-11 11" stroke={GREY} strokeWidth="3" /><circle cx="8" cy="8" r="5.500" fill={GREY} /><circle cx="8" cy="8" r="2.500" fill="#f5f5f5" /></Icon>
          </StatusToggle>
          <StatusCaret label="Workspace settings" />
        </Group>
        <Group className="-ml-[3px] w-[24px] border-l border-[#e0e0e0]"><StatusToggle label="Annotation monitor"><Icon><path d="M8 0v16M0 8h16" stroke={GREY} strokeWidth="2" /></Icon></StatusToggle></Group>
        <Group className="w-[24px]"><StatusToggle label="Isolate objects"><Icon><rect x=".5" y="1.500" width="6" height="5" stroke={GREY} /><circle cx="12.500" cy="6.500" r="3" stroke={GREY} /><path d="M6.500 9.500L3 15.500h7z" stroke={GREY} /></Icon></StatusToggle></Group>
        <Group className="w-[49px] gap-px">
          <StatusToggle label="Hardware acceleration"><Icon><path d="M1 1h8l6 5v7H7z" fill="#1f5c98" /><path d="M0 9h6v6H0z" fill="#f5b82e" /><path d="M4 1v6M1 4h6" stroke="#fff" /><path d="M6 12l3 3 6-7" stroke="#46a546" strokeWidth="2.500" /></Icon></StatusToggle>
          <StatusToggle label="Standards check"><Icon><path d="M.5 1.500h15v10H8" stroke={GREY} /><path d="M1 10l4-7 4 8 5-8" stroke="#3d7fb5" /><path d="M12 7l4.500 9H7.500z" fill="#e9752b" /><path d="M12 10v3M12 14v1" stroke="#fff" /></Icon></StatusToggle>
        </Group>
        <Group className="w-[50px] gap-1 pl-px">
          <StatusToggle label="Clean screen"><Icon><rect x=".5" y="2.500" width="15" height="11" stroke={GREY} /><path d="M4 8.500V11h2.500M4.500 10.500L7 8.500M9.500 5H12v2.500M11.500 5.500L9 7.500" stroke={GREY} /></Icon></StatusToggle>
          <StatusToggle label="Customization"><Icon crisp><path d="M0 3h16M0 8h16M0 13h16" stroke={GREY} strokeWidth="2" /></Icon></StatusToggle>
        </Group>
      </div>
    </footer>
  );
}

export default function App() {
  return (
    <div className="flex h-screen flex-col overflow-hidden border-b border-black bg-white pr-[7px] font-['Noto_Sans','Open_Sans',sans-serif] text-[11px] leading-4">
      <div className="bg-[#d9d9d9]">
        <Header />
        <Ribbon />
        <DocTabs />
      </div>
      <div className="h-1 shrink-0 bg-[#f5f5f5]" />
      <div className="flex min-h-0 flex-1">
        <LibraryExplorer />
        <Canvas />
        <PropertyManager />
      </div>
      <StatusBar />
    </div>
  );
}
